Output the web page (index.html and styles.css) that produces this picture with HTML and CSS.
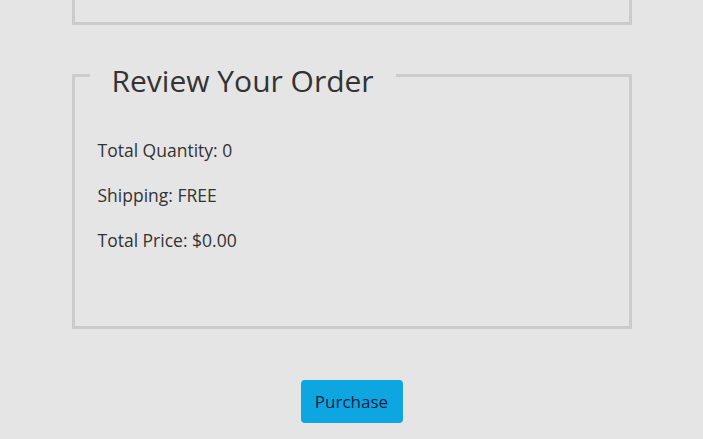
FILE: index.html
```html
<!DOCTYPE html>
<html>
<head>
<meta charset="utf-8">
<link rel="stylesheet" href="styles.css">
</head>
<body>
<div class="page">
  <div class="prev"></div>
  <fieldset class="review">
    <legend>Review Your Order</legend>
    <div class="lines">
      <p>Total Quantity: 0</p>
      <p>Shipping: FREE</p>
      <p>Total Price: $0.00</p>
    </div>
  </fieldset>
  <div class="actions">
    <button class="purchase">Purchase</button>
  </div>
</div>
</body>
</html>
```
FILE: styles.css
```css
html, body {
  margin: 0;
  padding: 0;
  background: #e5e5e5;
}
body {
  font-family: "Open Sans", "Noto Sans", sans-serif;
  color: #333;
}
.page {
  width: 560px;
  margin: 0 auto;
}
.prev {
  height: 22px;
  border: 3px solid #cccccc;
  border-top: none;
}
.review {
  margin: 25px 0 0;
  border: 3px solid #cccccc;
  padding: 0 20px 0 23px;
  height: 273px;
  box-sizing: content-box;
}
.review legend {
  font-size: 30px;
  line-height: 41px;
  padding: 10px 22px 0;
  margin-left: -8px;
  color: #333;
}
.lines {
  display: flex;
  flex-direction: column;
  gap: 21px;
  padding-top: 37px;
}
.lines p {
  margin: 0;
  font-size: 17.5px;
  line-height: 24px;
}
.actions {
  display: flex;
  justify-content: center;
  padding-top: 51px;
}
.purchase {
  width: 102px;
  height: 43px;
  border: none;
  border-radius: 4px;
  background: #0ea6e1;
  color: #0f1f4a;
  font-family: inherit;
  font-size: 17px;
  padding: 0;
}
```
